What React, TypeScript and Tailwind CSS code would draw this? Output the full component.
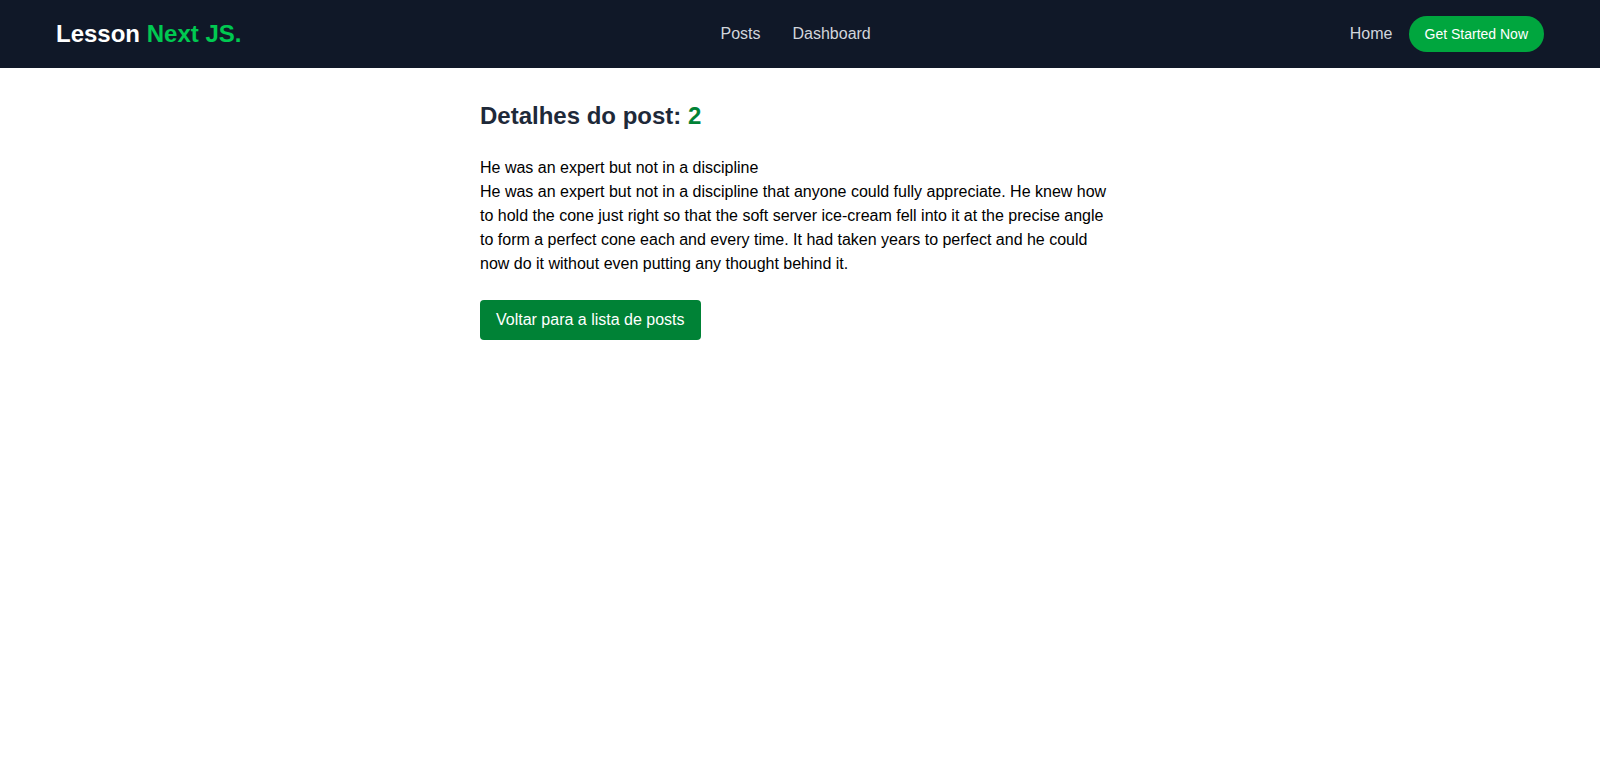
export default function App() {
  return (
    <div className="min-h-screen bg-white font-['Liberation_Sans',Arial,sans-serif]">
      {/* ── Top navigation ── */}
      <header className="flex items-center justify-between bg-gray-900 px-14 py-4">
        <a href="#" className="text-2xl font-bold text-white">
          Lesson <span className="text-green-500">Next JS.</span>
        </a>
        <nav className="flex items-center gap-8 text-gray-300">
          <a href="#">Posts</a>
          <a href="#">Dashboard</a>
        </nav>
        <div className="flex items-center gap-4">
          <a href="#" className="text-gray-300">
            Home
          </a>
          <button
            type="button"
            className="rounded-full bg-green-600 px-4 py-2 text-sm text-white"
          >
            Get Started Now
          </button>
        </div>
      </header>

      {/* ── Post detail ── */}
      <main className="mx-auto max-w-2xl px-4 pt-8">
        <h1 className="mb-6 text-2xl font-bold text-gray-800">
          Detalhes do post: <span className="text-green-700">2</span>
        </h1>
        <div className="mb-6 text-black">
          <p>He was an expert but not in a discipline</p>
          <p>
            He was an expert but not in a discipline that anyone could fully appreciate. He knew how
            to hold the cone just right so that the soft server ice-cream fell into it at the precise
            angle to form a perfect cone each and every time. It had taken years to perfect and he
            could now do it without even putting any thought behind it.
          </p>
        </div>
        <button type="button" className="rounded bg-green-700 px-4 py-2 text-white">
          Voltar para a lista de posts
        </button>
      </main>
    </div>
  );
}
